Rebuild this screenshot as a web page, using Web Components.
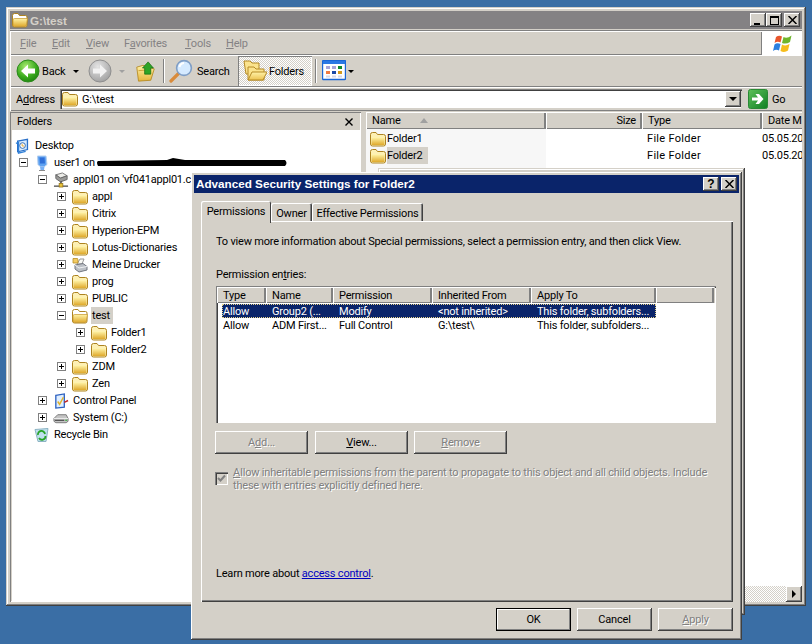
<!DOCTYPE html>
<html>
<head>
<meta charset="utf-8">
<style>
  html, body { margin: 0; padding: 0; overflow: hidden; }
</style>
</head>
<body>
<xp-desktop>
  <xp-window style="left:6px;top:7px;width:800px;height:599px">
    <xp-titlebar inactive icon="openfolder" heading="G:\test" buttons="min max close"></xp-titlebar>
    <xp-menubar></xp-menubar>
    <xp-toolbar></xp-toolbar>
    <xp-address></xp-address>
    <xp-explorer-body>
      <folder-tree slot="tree">
        <tree-row icon="desktop">Desktop</tree-row>
        <tree-row level="1" toggle="minus" icon="user">user1 on<x-redact></x-redact></tree-row>
        <tree-row level="2" toggle="minus" icon="server">appl01 on 'vf041appl01.corp'</tree-row>
        <tree-row level="3" toggle="plus" icon="folder">appl</tree-row>
        <tree-row level="3" toggle="plus" icon="folder">Citrix</tree-row>
        <tree-row level="3" toggle="plus" icon="folder">Hyperion-EPM</tree-row>
        <tree-row level="3" toggle="plus" icon="folder">Lotus-Dictionaries</tree-row>
        <tree-row level="3" toggle="plus" icon="printer">Meine Drucker</tree-row>
        <tree-row level="3" toggle="plus" icon="folder">prog</tree-row>
        <tree-row level="3" toggle="plus" icon="folder">PUBLIC</tree-row>
        <tree-row level="3" toggle="minus" icon="openfolder" selected>test</tree-row>
        <tree-row level="4" toggle="plus" icon="folder">Folder1</tree-row>
        <tree-row level="4" toggle="plus" icon="folder">Folder2</tree-row>
        <tree-row level="3" toggle="plus" icon="folder">ZDM</tree-row>
        <tree-row level="3" toggle="plus" icon="folder">Zen</tree-row>
        <tree-row level="2" toggle="plus" icon="control">Control Panel</tree-row>
        <tree-row level="2" toggle="plus" icon="drive">System (C:)</tree-row>
        <tree-row level="1" icon="recycle">Recycle Bin</tree-row>
      </folder-tree>
      <file-list slot="list">
        <file-row name="Folder1"></file-row>
        <file-row name="Folder2" selected></file-row>
      </file-list>
    </xp-explorer-body>
  </xp-window>

  <xp-window style="left:378px;top:168px;width:367px;height:447px"></xp-window>

  <security-dialog style="left:191px;top:172px;width:551px;height:468px">
    <xp-titlebar icon="" heading="Advanced Security Settings for Folder2" buttons="help close"></xp-titlebar>
    <xp-tabs></xp-tabs>
    <xp-panel>
      <div style="margin-bottom:20px">To view more information about Special permissions, select a permission entry, and then click View.</div>
      <div style="margin-bottom:5px">Permission en<u>t</u>ries:</div>
      <perm-list>
        <perm-row selected><span>Allow</span><span>Group2 (...</span><span>Modify</span><span>&lt;not inherited&gt;</span><span>This folder, subfolders...</span></perm-row>
        <perm-row><span>Allow</span><span>ADM First...</span><span>Full Control</span><span>G:\test\</span><span>This folder, subfolders...</span></perm-row>
      </perm-list>
      <button-row>
        <xp-button disabled style="width:93px">A<u>d</u>d...</xp-button>
        <xp-button style="width:93px;margin-left:7px"><u>V</u>iew...</xp-button>
        <xp-button disabled style="width:93px;margin-left:6px"><u>R</u>emove</xp-button>
      </button-row>
      <inherit-check><u style="letter-spacing:0">A</u>llow inheritable permissions from the parent to propagate to this object and all child objects. Include these with entries explicitly defined here.</inherit-check>
      <learn-more>Learn more about <a>access control</a>.</learn-more>
    </xp-panel>
    <dialog-actions>
      <xp-button default style="width:75px">OK</xp-button>
      <xp-button style="width:75px;margin-left:6px">Cancel</xp-button>
      <xp-button disabled style="width:75px;margin-left:6px"><u>A</u>pply</xp-button>
    </dialog-actions>
  </security-dialog>
</xp-desktop>

<script>
const RAISED = "inset -1px -1px #404040, inset 1px 1px #fff, inset -2px -2px #808080";
const FOLDER_GRAD = `<defs><linearGradient id="fg" x1="0" y1="0" x2="0" y2="1"><stop offset="0" stop-color="#fff3a6"/><stop offset="1" stop-color="#dfa92c"/></linearGradient></defs>`;

const ICONS = {
  folder: [16, `${FOLDER_GRAD}
    <path d="M.5 3.5Q.5 1.5 2.5 1.5H6L7.5 3.5H13.5Q15.5 3.5 15.5 5.5V13Q15.5 15 13.5 15H2.5Q.5 15 .5 13Z" fill="#fdf0b4" stroke="#ad8320"/>
    <path d="M1.5 6.5H14.5V13.5Q14.5 14 14 14H2Q1.5 14 1.5 13.5Z" fill="url(#fg)"/>`],
  openfolder: [16, `${FOLDER_GRAD}
    <path d="M.5 3.5Q.5 1.5 2.5 1.5H6L7.5 3.5H13.5Q15 3.5 15 5V13Q15 15 13.5 15H2.5Q.5 15 .5 13Z" fill="#fff" stroke="#ad8320"/>
    <path d="M1 8Q1 6.5 2.5 6.5H15.5L14.3 13.5Q14 14.5 13 14.5H2.5Q1 14.5 1 13.5Z" fill="url(#fg)" stroke="#c49428" stroke-width=".7"/>`],
  desktop: [18, `
    <path d="M3 3.5L14 1.5V13L3 15.5Z" fill="#d9ecff" stroke="#2a70c8" stroke-width="1.5"/>
    <path d="M1 6L4 5V17L12 15" fill="none" stroke="#2f80d8" stroke-width="1.5"/>
    <circle cx="8.5" cy="8.5" r="3.2" fill="#fff" stroke="#2060b0"/><path d="M8 6.5V9H10.5" stroke="#e0a020" fill="none"/>`],
  user: [16, `
    <path d="M3.5 1H12L13 9.5L10.5 11.5H6L4 9.5Z" fill="#5ea2f2" stroke="#b5cfee"/>
    <path d="M5.5 2.5H10.5L11 8.5H6Z" fill="#2f6fd8"/>
    <path d="M6 11.5H10.5L10 15H6.5Z" fill="#78b0f5"/><path d="M5 15.5H11" stroke="#8a8a8a"/>`],
  server: [17, `
    <path d="M3 3L10 1L15 4L8 6.5Z" fill="#ecece8" stroke="#777"/>
    <path d="M3 3V7L8 10.5L15 8V4L8 6.5Z" fill="#9a9a98" stroke="#666"/>
    <path d="M8.5 10V14" stroke="#333" stroke-width="1.4"/><path d="M1 15H16" stroke="#333" stroke-width="1.2"/>
    <rect x="6.5" y="12" width="4" height="4" fill="#e8c23a" stroke="#8b6a10" stroke-width=".7"/>`],
  printer: [16, `
    <path d="M5 7L8 2H12L10 7Z" fill="#f8f8f4" stroke="#999"/>
    <path d="M3 8L11 6.5L15 9.5V13L7 15L3 12Z" fill="#bcc0c6" stroke="#737780"/>
    <path d="M3 8L7 11L15 9.5" fill="none" stroke="#eef0f2"/>
    <path d="M1 1.5H5.5L6 3V6H1Z" fill="#f3cb63" stroke="#b68d25" stroke-width=".8"/>`],
  control: [17, `
    <path d="M3 2.5L12 1V15L3 16Z" fill="#dfeeff" stroke="#2b60c0" stroke-width="1.4"/>
    <path d="M5 9L7 12L11 4.5" fill="none" stroke="#e2b42c" stroke-width="1.6"/>
    <path d="M12 10L16 8" stroke="#c02828" stroke-width="1.6"/>`],
  drive: [17, `
    <path d="M1 9L5 5H14L16 9V12L14 13.5H3L1 12Z" fill="#c4c4c4" stroke="#777"/>
    <path d="M1 9H16" stroke="#eee"/><path d="M2 11H12" stroke="#555" stroke-width="1.4"/><rect x="13" y="10.2" width="2" height="1.5" fill="#4caf50"/>`],
  recycle: [16, `
    <path d="M1 2.5L14 1.5L12 14.5H4Z" fill="#bfe0ee" stroke="#8db4c4"/>
    <path d="M4 8A3.5 3.5 0 0 1 11 7M11.5 9A3.5 3.5 0 0 1 5 11" fill="none" stroke="#28a428" stroke-width="1.8"/>`],
  back: [24, `
    <defs><radialGradient id="g" cx=".4" cy=".3" r=".8"><stop offset="0" stop-color="#a8ea70"/><stop offset=".6" stop-color="#38a91c"/><stop offset="1" stop-color="#1a7a0d"/></radialGradient></defs>
    <circle cx="12" cy="12" r="11" fill="url(#g)" stroke="#2c8a1c"/>
    <path d="M5 12L12 5.5V9.5H19V14.5H12V18.5Z" fill="#fff"/>`],
  forward: [24, `
    <defs><radialGradient id="g" cx=".4" cy=".3" r=".8"><stop offset="0" stop-color="#e4e4e4"/><stop offset="1" stop-color="#9a9a9a"/></radialGradient></defs>
    <circle cx="12" cy="12" r="11" fill="url(#g)" stroke="#8f8f8f"/>
    <path d="M19 12L12 5.5V9.5H5V14.5H12V18.5Z" fill="#f2f2f2"/>`],
  up: [24, `
    <defs><linearGradient id="fg" x1="0" y1="0" x2="0" y2="1"><stop offset="0" stop-color="#fff2a8"/><stop offset="1" stop-color="#e6b53c"/></linearGradient></defs>
    <path d="M2 7L9 5L22 9L18 22L4 23Z" fill="url(#fg)" stroke="#b58a25"/>
    <path d="M4 11L18 10" stroke="#c99b30"/>
    <path d="M15 1L21 8H18V15H11V8H8.5Z" fill="#2ea426" stroke="#156a10" stroke-width=".8"/>`],
  search: [24, `
    <path d="M9.5 14.5L2 22" stroke="#d98b3a" stroke-width="3.2" stroke-linecap="round"/>
    <circle cx="15" cy="9" r="7.4" fill="#d5eaff" stroke="#7f9ec6" stroke-width="1.6"/>
    <path d="M10.5 8A5 5 0 0 1 15 4" fill="none" stroke="#fff" stroke-width="2"/>`],
  folders: [24, `
    <defs><linearGradient id="fg" x1="0" y1="0" x2="0" y2="1"><stop offset="0" stop-color="#fff2a8"/><stop offset="1" stop-color="#ecc251"/></linearGradient></defs>
    <path d="M1 2H7L9 4H16V15H3Z" fill="#fbe38d" stroke="#b58a25"/>
    <path d="M5 8H11L13 10H21V21H5Z" fill="#fbe38d" stroke="#b58a25"/>
    <path d="M5 21L9 13H24L20 21Z" fill="url(#fg)" stroke="#b58a25"/>`],
  views: [24, `
    <rect x=".5" y=".5" width="23" height="19" rx="1" fill="#fff" stroke="#1a66d6" stroke-width="1.4"/>
    <rect x="1" y="1" width="22" height="3" fill="#2a78e4"/>
    <rect x="4" y="6" width="4" height="3" fill="#a9a4d8"/><rect x="10" y="6" width="4" height="3" fill="#a9a4d8"/><rect x="16" y="6" width="4" height="3" fill="#0d8a2a"/>
    <rect x="4" y="11" width="4" height="3" fill="#f07a40"/><rect x="10" y="11" width="4" height="3" fill="#1c4aa8"/><rect x="16" y="11" width="4" height="3" fill="#d49a1c"/>
    <rect x="4" y="15.5" width="4" height="2" fill="#d8d8e8"/><rect x="10" y="15.5" width="4" height="2" fill="#d8d8e8"/><rect x="16" y="15.5" width="4" height="2" fill="#d8d8e8"/>`],
  go: [20, `
    <defs><linearGradient id="g" x1="0" y1="0" x2="1" y2="1"><stop offset="0" stop-color="#5ec15a"/><stop offset="1" stop-color="#0f7f22"/></linearGradient></defs>
    <rect x=".5" y=".5" width="19" height="19" rx="2" fill="url(#g)" stroke="#2a8a35"/>
    <path d="M4 8.5H10L7.5 5H11L15.5 10L11 15H7.5L10 11.5H4Z" fill="#fff"/>`],
  flag: [21, `
    <path d="M4 4Q7 2 10 3.5L8.5 9.5Q5.5 8 2.5 10Z" fill="#e8562c"/>
    <path d="M11.5 4Q15 6 19.5 2.5L18 9Q14 11.5 10 10Z" fill="#6fb52c"/>
    <path d="M2.5 11.5Q5 9.5 8.5 11L7 17.5Q4 16 1 18Z" fill="#2a7fe0"/>
    <path d="M10 11.5Q13.5 13.5 17.5 11L16 17.5Q12.5 20 8.5 18Z" fill="#f6bd1c"/>`]
};

class XpIcon extends HTMLElement {
  connectedCallback() {
    const [box, body] = ICONS[this.getAttribute("name")];
    const size = this.getAttribute("size") || box;
    this.attachShadow({ mode: "open" }).innerHTML = /* html */`
      <style>:host { display: inline-block; line-height: 0; flex: none; }</style>
      <svg width="${size}" height="${size}" viewBox="0 0 ${box} ${box}">${body}</svg>`;
  }
}

class XpDesktop extends HTMLElement {
  constructor() {
    super();
    this.attachShadow({ mode: "open" }).innerHTML = /* html */`
      <style>
        :host {
          display: block; position: relative; width: 812px; height: 644px; overflow: hidden;
          background: #3a6ea5; color: #000;
          font: 11px/13px Roboto, "Liberation Sans", sans-serif; letter-spacing: -.2px;
        }
      </style>
      <slot></slot>`;
  }
}

class XpWindow extends HTMLElement {
  constructor() {
    super();
    this.attachShadow({ mode: "open" }).innerHTML = /* html */`
      <style>
        :host {
          position: absolute; display: flex; flex-direction: column; box-sizing: border-box;
          padding: 4px; background: #d4d0c8;
          box-shadow: inset -1px -1px #404040, inset 1px 1px #d4d0c8, inset -2px -2px #808080, inset 2px 2px #fff;
        }
      </style>
      <slot></slot>`;
  }
}

class XpTitlebar extends HTMLElement {
  connectedCallback() {
    const glyphs = {
      min: `<i style="display:block;width:6px;height:2px;background:#000;margin:7px 0 0 -2px"></i>`,
      max: `<i style="display:block;width:9px;height:9px;box-sizing:border-box;border:1px solid #000;border-top-width:2px"></i>`,
      close: `<svg width="9" height="8" viewBox="0 0 9 8"><path d="M.5 0L8.5 8M8.5 0L.5 8" stroke="#000" stroke-width="1.5"/></svg>`,
      help: `<b style="font:bold 12px 'Liberation Sans',sans-serif">?</b>`
    };
    const buttons = (this.getAttribute("buttons") || "").split(" ").map((b) =>
      `<span class="btn ${b}">${glyphs[b]}</span>`).join("");
    const icon = this.getAttribute("icon");
    this.attachShadow({ mode: "open" }).innerHTML = /* html */`
      <style>
        :host {
          display: flex; align-items: center; height: 18px; flex: none;
          background: ${this.hasAttribute("inactive") ? "#848284" : "#0a246a"};
          color: ${this.hasAttribute("inactive") ? "#d4d0c8" : "#fff"};
          padding: 0 2px; letter-spacing: 0;
        }
        .name { flex: 1; margin: ${icon ? "0 0 0 2px" : "0 0 1px 0"}; white-space: nowrap; font: bold 11.7px/13px "Liberation Sans", sans-serif; }
        .btn {
          display: flex; align-items: center; justify-content: center;
          width: 16px; height: 14px; background: #d4d0c8; color: #000; box-shadow: ${RAISED};
        }
        .btn + .btn { margin-left: 2px; }
        .btn.max { margin-left: 0; }
      </style>
      ${icon ? `<xp-icon name="${icon}"></xp-icon>` : ""}
      <span class="name">${this.getAttribute("heading")}</span>
      ${buttons}`;
  }
}

class XpMenubar extends HTMLElement {
  constructor() {
    super();
    this.attachShadow({ mode: "open" }).innerHTML = /* html */`
      <style>
        :host {
          display: flex; align-items: center; height: 25px; margin-top: 1px; flex: none;
          box-sizing: border-box; color: #848284;
          box-shadow: inset 0 1px #808080, inset 0 2px #fff, inset 1px 0 #fff, inset 0 -1px #808080;
        }
        .items { display: grid; grid-template-columns: 32px 34px 38px 61px 41px auto; margin: 2px 0 0 10px; flex: 1; }
        .logo { display: flex; align-items: center; justify-content: center; width: 40px; height: 23px; margin-top: 1px; background: #fff; border-left: 1px solid #808080; }
      </style>
      <div class="items">
        <span><u>F</u>ile</span><span><u>E</u>dit</span><span><u>V</u>iew</span>
        <span>F<u>a</u>vorites</span><span><u>T</u>ools</span><span><u>H</u>elp</span>
      </div>
      <div class="logo"><xp-icon name="flag"></xp-icon></div>`;
  }
}

class XpToolbar extends HTMLElement {
  constructor() {
    super();
    this.attachShadow({ mode: "open" }).innerHTML = /* html */`
      <style>
        :host {
          display: flex; align-items: center; height: 32px; flex: none; padding-left: 6px;
          box-sizing: border-box;
          box-shadow: inset 0 1px #fff, inset 1px 0 #fff, inset 0 -1px #808080;
        }
        .arrow { width: 0; height: 0; border: 3px solid transparent; border-top: 3px solid #000; border-bottom: 0; margin-top: 1px; }
        .arrow.off { border-top-color: #a0a0a0; }
        .sep { width: 1px; height: 24px; background: #808080; box-shadow: 1px 0 #fff; }
        .pressed {
          display: flex; align-items: center; width: 74px; height: 30px; padding-left: 5px; box-sizing: border-box;
          background: repeating-conic-gradient(#fff 0 25%, #d4d0c8 0 50%) 0 0 / 2px 2px;
          box-shadow: inset 1px 1px #808080, inset -1px -1px #fff;
        }
      </style>
      <xp-icon name="back"></xp-icon>
      <span style="margin-left:2px;width:31px">Back</span><span class="arrow"></span>
      <xp-icon name="forward" style="margin-left:9px"></xp-icon>
      <span class="arrow off" style="margin-left:7px"></span>
      <xp-icon name="up" size="21" style="margin-left:10px"></xp-icon>
      <span class="sep" style="margin-left:7px"></span>
      <xp-icon name="search" style="margin-left:5px"></xp-icon>
      <span style="margin-left:4px;width:41px">Search</span>
      <div class="pressed"><xp-icon name="folders"></xp-icon><span style="margin-left:2px">Folders</span></div>
      <span class="sep" style="margin-left:3px"></span>
      <xp-icon name="views" style="margin-left:6px;margin-top:2px"></xp-icon>
      <span class="arrow" style="margin-left:2px"></span>`;
  }
}

class XpAddress extends HTMLElement {
  constructor() {
    super();
    this.attachShadow({ mode: "open" }).innerHTML = /* html */`
      <style>
        :host {
          display: flex; align-items: center; height: 24px; flex: none; box-sizing: border-box;
          padding-left: 6px;
          box-shadow: inset 0 1px #fff, inset 1px 0 #fff, inset 0 -1px #808080;
        }
        .label { width: 44px; }
        .field {
          display: flex; align-items: center; width: 682px; height: 20px; box-sizing: border-box; background: #fff; padding-left: 2px;
          box-shadow: inset 1px 1px #808080, inset 2px 2px #404040, inset -1px -1px #d4d0c8;
          margin-right: 6px;
        }
        .text { flex: 1; margin-left: 4px; }
        .drop {
          display: flex; align-items: center; justify-content: center; width: 16px; height: 16px;
          background: #d4d0c8; margin-right: 1px; box-shadow: ${RAISED};
        }
        .drop i { border: 4px solid transparent; border-top: 4px solid #000; border-bottom: 0; }
      </style>
      <span class="label">A<u>d</u>dress</span>
      <div class="field"><xp-icon name="folder"></xp-icon><span class="text">G:\\test</span><span class="drop"><i></i></span></div>
      <xp-icon name="go"></xp-icon><span style="margin-left:4px">Go</span>`;
  }
}

class XpExplorerBody extends HTMLElement {
  constructor() {
    super();
    this.attachShadow({ mode: "open" }).innerHTML = /* html */`
      <style>
        :host { display: flex; flex: 1; min-height: 0; padding-top: 1px; gap: 5px; }
        ::slotted([slot=tree]) { width: 351px; flex: none; }
        ::slotted([slot=list]) { flex: 1; min-width: 0; }
      </style>
      <slot name="tree"></slot><slot name="list"></slot>`;
  }
}

class FolderTree extends HTMLElement {
  constructor() {
    super();
    this.attachShadow({ mode: "open" }).innerHTML = /* html */`
      <style>
        :host { display: flex; flex-direction: column; overflow: hidden; box-shadow: inset 1px 1px #808080, inset -1px -1px #fff; }
        .head { display: flex; align-items: center; justify-content: space-between; height: 18px; flex: none; padding: 1px 7px 0 7px; box-sizing: border-box; }
        .body { flex: 1; margin: 0 1px 1px 2px; background: #fff; padding-top: 7px; overflow: hidden; }
      </style>
      <div class="head"><span>Folders</span>
        <svg width="8" height="8" viewBox="0 0 8 8" style="margin-right:1px"><path d="M.5 .5L7.5 7.5M7.5 .5L.5 7.5" stroke="#000" stroke-width="1.4"/></svg>
      </div>
      <div class="body"><slot></slot></div>`;
  }
}

class TreeRow extends HTMLElement {
  connectedCallback() {
    const level = +(this.getAttribute("level") || 0);
    const toggle = this.getAttribute("toggle");
    const offset = level ? 19 * level - 12 : 3;
    const mark = toggle
      ? `<span class="box"><i class="h"></i>${toggle === "plus" ? '<i class="v"></i>' : ""}</span>`
      : (level ? '<span class="box none"></span>' : "");
    this.attachShadow({ mode: "open" }).innerHTML = /* html */`
      <style>
        :host { display: flex; align-items: center; height: 17px; padding-left: ${offset}px; white-space: nowrap; }
        .box { position: relative; width: 9px; height: 9px; box-sizing: border-box; border: 1px solid #808080; background: #fff; margin-right: 6px; flex: none; }
        .box.none { border-color: transparent; background: none; }
        .box i { position: absolute; background: #000; }
        .h { left: 1px; top: 3px; width: 5px; height: 1px; }
        .v { left: 3px; top: 1px; width: 1px; height: 5px; }
        .icon { width: 19px; flex: none; display: flex; }
        .label { padding: 2px 1px; height: 13px; ${this.hasAttribute("selected") ? "background:#d4d0c8;padding-right:3px;" : ""} }
      </style>
      ${mark}<span class="icon"><xp-icon name="${this.getAttribute("icon")}" size="16"></xp-icon></span>
      <span class="label"><slot></slot></span>`;
  }
}

class XRedact extends HTMLElement {
  constructor() {
    super();
    this.attachShadow({ mode: "open" }).innerHTML = /* html */`
      <style>:host { display: inline-block; position: relative; width: 192px; height: 9px; vertical-align: -1px; line-height: 0; }</style>
      <svg width="192" height="10" viewBox="0 0 192 10">
        <path d="M3 4Q1 5 3 9L190 9Q193 6 190 3L90 3L78 1L72 3Z" fill="#000"/>
      </svg>`;
  }
}

class FileList extends HTMLElement {
  constructor() {
    super();
    this.attachShadow({ mode: "open" }).innerHTML = /* html */`
      <style>
        :host { display: flex; flex-direction: column; overflow: hidden; background: #fff; }
        .head { display: grid; grid-template-columns: 180px 96px 120px 60px; height: 17px; flex: none; background: #d4d0c8; }
        .head span { display: flex; align-items: center; padding: 0 6px; box-sizing: border-box; white-space: nowrap; box-shadow: inset 1px 1px #fff, inset -1px -1px #808080, inset -2px 0 #808080; }
        .head span:last-child { box-shadow: inset 1px 1px #fff, inset 0 -1px #808080; }
        .sort { width: 0; height: 0; border: 4px solid transparent; border-bottom: 5px solid #a0a0a0; border-top: 0; margin-left: 19px; }
        .rows { flex: 1; padding-top: 1px; background: linear-gradient(to right, #f7f7f7 180px, #fff 0); }
        .scroll { display: flex; justify-content: flex-end; height: 16px; flex: none; background: repeating-conic-gradient(#fff 0 25%, #d4d0c8 0 50%) 0 0 / 2px 2px; }
        .scroll b { display: flex; align-items: center; justify-content: center; width: 16px; background: #d4d0c8; box-shadow: ${RAISED}; }
        .scroll i { border: 4px solid transparent; border-left: 4px solid #000; border-right: 0; }
      </style>
      <div class="head"><span>Name<i class="sort"></i></span><span style="justify-content:flex-end">Size</span><span>Type</span><span>Date M</span></div>
      <div class="rows"><slot></slot></div>
      <div class="scroll"><b><i></i></b></div>`;
  }
}

class FileRow extends HTMLElement {
  connectedCallback() {
    this.attachShadow({ mode: "open" }).innerHTML = /* html */`
      <style>
        :host { display: grid; grid-template-columns: 180px 96px 120px 60px; height: 17px; align-items: center; white-space: nowrap; }
        .name { display: flex; align-items: center; padding-left: 4px; }
        .name b { font-weight: normal; margin-left: 1px; padding: 2px 0; height: 13px; ${this.hasAttribute("selected") ? "background:#d4d0c8;padding-right:6px;" : ""} }
        span:nth-child(3), span:nth-child(4) { padding-left: 5px; }
        span:nth-child(4) { letter-spacing: .3px; }
      </style>
      <span class="name"><xp-icon name="folder"></xp-icon><b>${this.getAttribute("name")}</b></span>
      <span></span><span>File Folder</span><span>05.05.2010</span>`;
  }
}

class SecurityDialog extends HTMLElement {
  constructor() {
    super();
    this.attachShadow({ mode: "open" }).innerHTML = /* html */`
      <style>
        :host {
          position: absolute; display: flex; flex-direction: column; box-sizing: border-box;
          padding: 3px; background: #d4d0c8;
          box-shadow: inset -1px -1px #404040, inset 1px 1px #fff, inset -2px -2px #808080;
        }
      </style>
      <slot></slot>`;
  }
}

class XpTabs extends HTMLElement {
  constructor() {
    super();
    this.attachShadow({ mode: "open" }).innerHTML = /* html */`
      <style>
        :host { display: flex; align-items: flex-end; height: 20px; margin: 8px 0 0 7px; flex: none; position: relative; z-index: 1; }
        span {
          display: flex; align-items: center; justify-content: center; box-sizing: border-box; height: 18px; padding-top: 2px; background: #d4d0c8;
          box-shadow: inset 1px 1px #fff, inset -1px 0 #404040, inset -2px 0 #808080;
          border-radius: 2px 2px 0 0;
        }
        .on { width: 70px; height: 22px; margin-bottom: -2px; box-shadow: inset 1px 1px #fff, inset -1px 0 #404040; padding: 0 0 2px; }
      </style>
      <span class="on">Permissions</span>
      <span style="width:41px">Owner</span>
      <span style="width:111px">Effective Permissions</span>`;
  }
}

class XpPanel extends HTMLElement {
  constructor() {
    super();
    this.attachShadow({ mode: "open" }).innerHTML = /* html */`
      <style>
        :host {
          display: flex; flex-direction: column; box-sizing: border-box; height: 381px; margin: 0 6px 0 7px; flex: none;
          padding: 14px 15px 22px 15px;
          box-shadow: inset 1px 1px #fff, inset -1px -1px #404040, inset -2px -2px #808080;
        }
      </style>
      <slot></slot>`;
  }
}

class PermList extends HTMLElement {
  constructor() {
    super();
    this.attachShadow({ mode: "open" }).innerHTML = /* html */`
      <style>
        :host {
          display: block; height: 137px; width: 500px; box-sizing: border-box; flex: none; background: #fff;
          padding: 2px 1px 0 1px;
          box-shadow: inset 1px 1px #808080, inset 2px 2px #404040, inset -1px -1px #fff;
        }
        .head { display: grid; grid-template-columns: 49px 67px 99px 99px 125px 58px; height: 16px; background: #d4d0c8; margin: -1px 0 1px; }
        .head span { display: flex; align-items: center; padding: 1px 0 0 6px; box-sizing: border-box; box-shadow: inset 1px 1px #fff, inset -1px -1px #808080, inset -2px 0 #808080; }
      </style>
      <div class="head"><span>Type</span><span>Name</span><span>Permission</span><span>Inherited From</span><span>Apply To</span><span></span></div>
      <slot></slot>`;
  }
}

class PermRow extends HTMLElement {
  connectedCallback() {
    const on = this.hasAttribute("selected");
    this.attachShadow({ mode: "open" }).innerHTML = /* html */`
      <style>
        :host {
          display: grid; grid-template-columns: 44px 67px 99px 99px 125px; width: 434px; height: 14px; margin-left: 5px;
          box-sizing: border-box; align-items: center; white-space: nowrap;
          ${on ? "background:#0a246a;color:#fff;outline:1px dotted #e6d28a;outline-offset:-1px;" : ""}
        }
        ::slotted(span) { padding-left: 6px; }
        ::slotted(span:first-child) { padding-left: 1px; }
      </style>
      <slot></slot>`;
  }
}

class ButtonRow extends HTMLElement {
  constructor() {
    super();
    this.attachShadow({ mode: "open" }).innerHTML = `<style>:host { display: flex; margin-top: 8px; margin-left: -1px; }</style><slot></slot>`;
  }
}

class XpButton extends HTMLElement {
  connectedCallback() {
    const off = this.hasAttribute("disabled");
    const def = this.hasAttribute("default");
    this.attachShadow({ mode: "open" }).innerHTML = /* html */`
      <style>
        :host {
          display: flex; align-items: center; justify-content: center; height: 23px; box-sizing: border-box; flex: none;
          ${off ? "color:#808080;text-shadow:1px 1px #fff;" : ""}
          box-shadow: ${def ? "inset 0 0 0 1px #000, inset -2px -2px #808080, inset 2px 2px #fff" : RAISED};
        }
      </style>
      <slot></slot>`;
  }
}

class InheritCheck extends HTMLElement {
  constructor() {
    super();
    this.attachShadow({ mode: "open" }).innerHTML = /* html */`
      <style>
        :host { display: flex; margin: 12px 0 0 -1px; color: #808080; text-shadow: 1px 1px #fff; }
        .box { width: 13px; height: 13px; margin: 6px 5px 0 0; flex: none; box-sizing: border-box; background: #d4d0c8; box-shadow: inset 1px 1px #808080, inset 2px 2px #404040, inset -1px -1px #fff; }
        .text { width: 490px; }
      </style>
      <div class="box"><svg width="13" height="13" viewBox="0 0 13 13"><path d="M3 6L5.5 8.5L10 3.5" fill="none" stroke="#808080" stroke-width="2"/></svg></div>
      <div class="text"><slot></slot></div>`;
  }
}

class LearnMore extends HTMLElement {
  constructor() {
    super();
    this.attachShadow({ mode: "open" }).innerHTML = /* html */`
      <style>
        :host { display: block; margin-top: auto; }
        ::slotted(a) { color: #0000c0; text-decoration: underline; }
      </style>
      <slot></slot>`;
  }
}

class DialogActions extends HTMLElement {
  constructor() {
    super();
    this.attachShadow({ mode: "open" }).innerHTML = `<style>:host { display: flex; justify-content: flex-end; margin: 6px 6px 0 0; }</style><slot></slot>`;
  }
}

customElements.define("xp-icon", XpIcon);
customElements.define("xp-desktop", XpDesktop);
customElements.define("xp-window", XpWindow);
customElements.define("xp-titlebar", XpTitlebar);
customElements.define("xp-menubar", XpMenubar);
customElements.define("xp-toolbar", XpToolbar);
customElements.define("xp-address", XpAddress);
customElements.define("xp-explorer-body", XpExplorerBody);
customElements.define("folder-tree", FolderTree);
customElements.define("tree-row", TreeRow);
customElements.define("x-redact", XRedact);
customElements.define("file-list", FileList);
customElements.define("file-row", FileRow);
customElements.define("security-dialog", SecurityDialog);
customElements.define("xp-tabs", XpTabs);
customElements.define("xp-panel", XpPanel);
customElements.define("perm-list", PermList);
customElements.define("perm-row", PermRow);
customElements.define("button-row", ButtonRow);
customElements.define("xp-button", XpButton);
customElements.define("inherit-check", InheritCheck);
customElements.define("learn-more", LearnMore);
customElements.define("dialog-actions", DialogActions);
</script>
</body>
</html>
